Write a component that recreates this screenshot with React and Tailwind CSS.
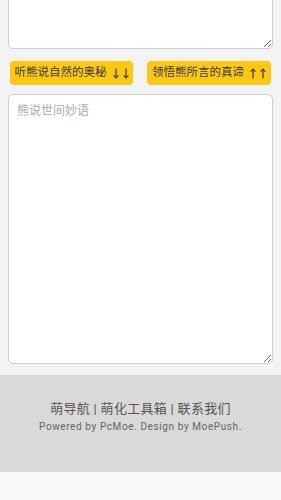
const Arrow = ({ up }) => (
  <svg width="6" height="11" viewBox="0 0 6 11" fill="none" stroke="#3a3a3a" strokeWidth="1.2">
    {up ? (
      <>
        <path d="M3 1.2V10.5" />
        <path d="M0.6 3.6L3 1.2L5.4 3.6" />
      </>
    ) : (
      <>
        <path d="M3 0.5V9.8" />
        <path d="M0.6 7.4L3 9.8L5.4 7.4" />
      </>
    )}
  </svg>
);

export default function App() {
  const font = { fontFamily: 'Roboto, "Noto Sans CJK SC", sans-serif' };
  return (
    <div className="min-h-[500px] bg-[#f3f3f3] overflow-hidden" style={font}>
      <div className="px-2">
        <textarea
          className="block w-full h-[62px] mt-[-13px] rounded-[5px] border border-[#cfcfcf] bg-white resize-y outline-none"
          defaultValue=""
        />
        <div className="flex justify-between px-[2px] mt-[12px]">
          <button className="h-[24px] w-[123px] rounded-[4px] bg-[#fcc814] text-[11.5px] leading-none text-[#3a3a3a] flex items-center justify-center whitespace-nowrap">
            听熊说自然的奥秘
            <span className="ml-[6px] flex gap-[4px]">
              <Arrow />
              <Arrow />
            </span>
          </button>
          <button className="h-[24px] w-[124px] rounded-[4px] bg-[#fcc814] text-[11.5px] leading-none text-[#3a3a3a] flex items-center justify-center whitespace-nowrap">
            领悟熊所言的真谛
            <span className="ml-[6px] flex gap-[4px]">
              <Arrow up />
              <Arrow up />
            </span>
          </button>
        </div>
        <textarea
          className="block w-full h-[270px] mt-[9px] rounded-[5px] border border-[#cfcfcf] bg-white px-2 py-[7px] text-[12px] text-[#444] placeholder:text-[#ababab] resize-y outline-none"
          placeholder="熊说世间妙语"
        />
      </div>
      <footer className="mt-[11px] h-[97px] bg-[#d9d9d9] flex flex-col items-center pt-[24px]">
        <div className="text-[13px] leading-[20px] text-[#555] tracking-[0.3px]">
          萌导航 | 萌化工具箱 | 联系我们
        </div>
        <div className="text-[10px] leading-[14px] text-[#666] tracking-[0.6px] mt-[1px]">
          Powered by PcMoe. Design by MoePush.
        </div>
      </footer>
      <div className="h-[29px] bg-[#f8f8f8]" />
    </div>
  );
}
